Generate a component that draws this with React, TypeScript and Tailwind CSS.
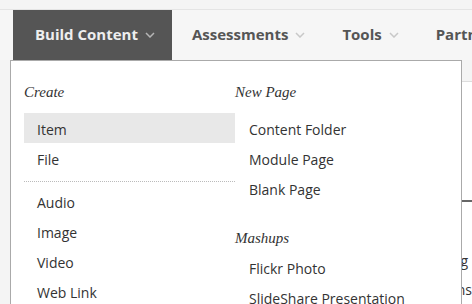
import React from 'react';

const NAV = [
    { label: 'Build Content', active: true },
    { label: 'Assessments' },
    { label: 'Tools' },
    { label: 'Partners' },
];

const CREATE = ['Item', 'File'];
const MEDIA = ['Audio', 'Image', 'Video', 'Web Link'];
const NEW_PAGE = ['Content Folder', 'Module Page', 'Blank Page'];
const MASHUPS = ['Flickr Photo', 'SlideShare Presentation'];

const Chevron: React.FC<{ className?: string }> = ({ className }) => (
    <svg width="10" height="6" viewBox="0 0 10 6" className={className}>
        <path d="M1 1l4 4 4-4" fill="none" stroke="currentColor" strokeWidth="1.5" />
    </svg>
);

const Row: React.FC<{ label: string; active?: boolean; right?: boolean }> = ({ label, active, right }) => (
    <div
        className={`h-[30px] leading-[30px] pt-[2px] text-[14px] text-[#333] whitespace-nowrap ${right ? 'pl-[14px]' : 'pl-[13px]'} ${active ? 'bg-[#e8e8e8]' : ''}`}
    >
        {label}
    </div>
);

const Heading: React.FC<{ label: string; className: string }> = ({ label, className }) => (
    <div className={`h-[20px] leading-[20px] text-[15px] italic text-[#333] ${className}`} style={{ fontFamily: '"Liberation Serif", serif' }}>
        {label}
    </div>
);

const App: React.FC = () => {
    return (
        <div className="relative w-[472px] h-[304px] overflow-hidden bg-[#f4f4f4]" style={{ fontFamily: '"Open Sans", sans-serif' }}>
            <div className="h-[10px] border-b border-[#e4e4e4]" />
            <nav className="flex h-[50px] bg-[#f6f6f6] pl-[13px]">
                {NAV.map((item) => (
                    <div
                        key={item.label}
                        className={`flex items-center gap-[7px] pb-[2px] text-[15px] font-bold whitespace-nowrap ${
                            item.active ? 'bg-[#555555] text-[#eeeeee] pl-[22px] pr-[17px]' : 'text-[#555555] pl-[20px] pr-[17px]'
                        }`}
                    >
                        {item.label}
                        <Chevron className={item.active ? 'text-[#b5b5b5] mt-[2px]' : 'text-[#c8c8c8] mt-[2px]'} />
                    </div>
                ))}
            </nav>

            <div className="flex h-[244px]">
                <div className="w-[461px]" />
                <div className="flex-1 flex flex-col">
                    <div className="h-[23px]" />
                    <div className="h-[128px] border-t border-[#dddddd] bg-white" />
                    <div className="flex-1 border-t-2 border-[#666666] bg-white text-[14px] text-[#333] leading-[29px] pt-[44px] -ml-[3px] whitespace-nowrap">
                        <div>ing</div>
                        <div>ons</div>
                    </div>
                </div>
            </div>

            <div className="absolute left-[10px] top-[60px] w-[452px] h-[260px] bg-white border border-[#aaaaaa] flex pl-[13px]">
                <div className="w-[211px] flex flex-col">
                    <Heading label="Create" className="mt-[21px] mb-[11px]" />
                    {CREATE.map((c, i) => (
                        <Row key={c} label={c} active={i === 0} />
                    ))}
                    <div className="mt-[8px] mb-[4px] border-t border-dotted border-[#bbbbbb]" />
                    {MEDIA.map((m) => (
                        <Row key={m} label={m} />
                    ))}
                </div>
                <div className="flex-1 flex flex-col">
                    <Heading label="New Page" className="mt-[21px] mb-[11px]" />
                    {NEW_PAGE.map((p) => (
                        <Row key={p} label={p} right />
                    ))}
                    <Heading label="Mashups" className="mt-[25px] mb-[4px]" />
                    {MASHUPS.map((m) => (
                        <Row key={m} label={m} right />
                    ))}
                </div>
            </div>
        </div>
    );
};

export default App;
